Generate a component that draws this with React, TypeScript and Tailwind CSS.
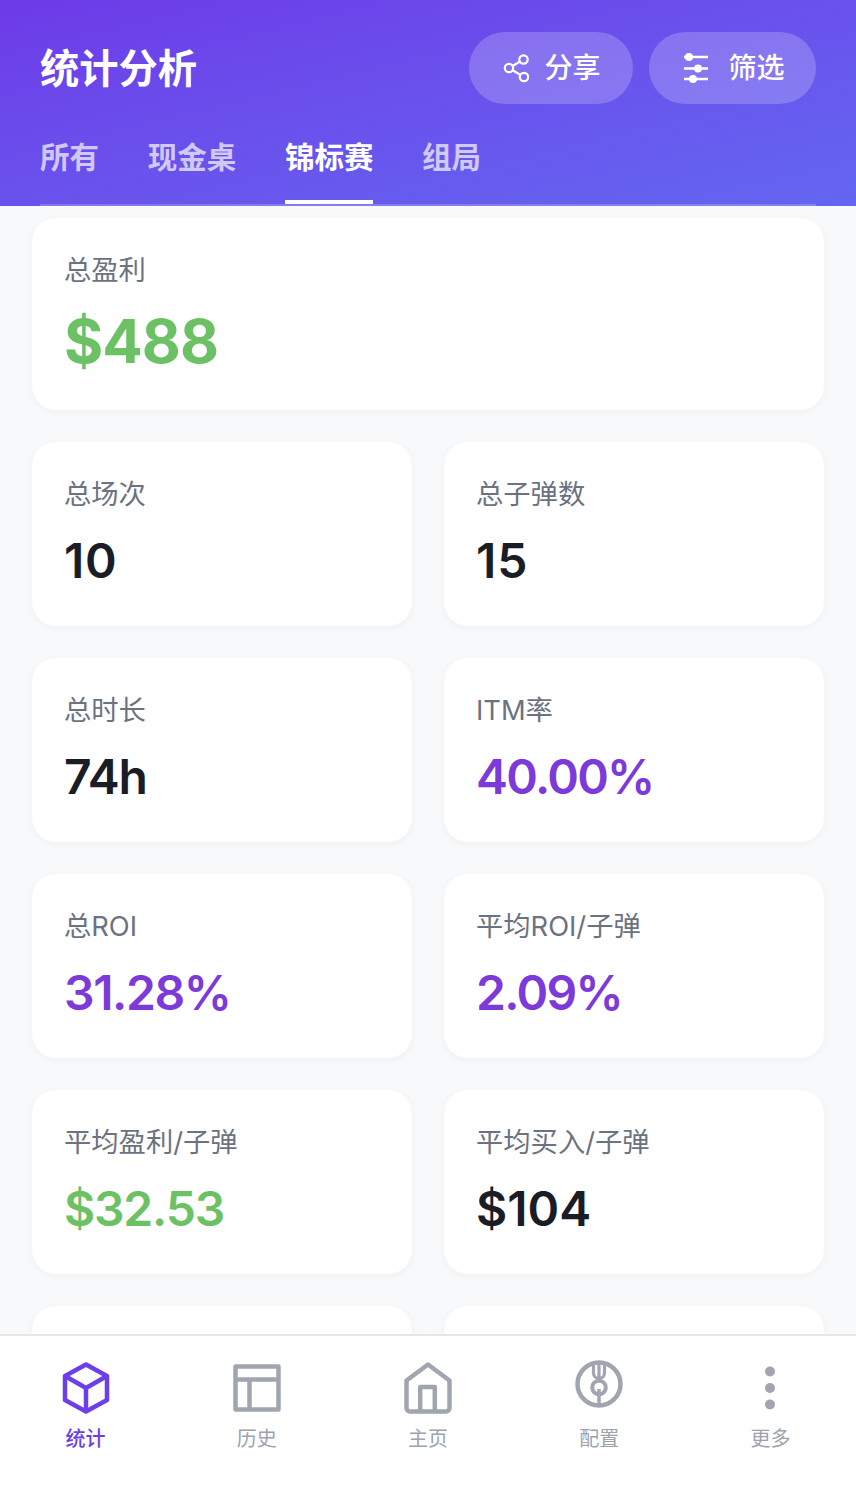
import type { ReactNode } from "react";

const font = "font-['Inter','Noto_Sans_CJK_SC',sans-serif]";

type Stat = {
  label: string;
  value: string;
  color: string;
  tracking?: string;
};

const stats: Stat[] = [
  { label: "总场次", value: "10", color: "text-[#1a1d26]", tracking: "tracking-[0.8px]" },
  { label: "总子弹数", value: "15", color: "text-[#1a1d26]", tracking: "tracking-[1px]" },
  { label: "总时长", value: "74h", color: "text-[#1a1d26]", tracking: "tracking-[-1.2px]" },
  { label: "ITM率", value: "40.00%", color: "text-[#7c3adb]", tracking: "tracking-[-1.7px]" },
  { label: "总ROI", value: "31.28%", color: "text-[#7c3adb]", tracking: "tracking-[-1.4px]" },
  { label: "平均ROI/子弹", value: "2.09%", color: "text-[#7c3adb]", tracking: "tracking-[-1.7px]" },
  { label: "平均盈利/子弹", value: "$32.53", color: "text-[#6cc164]", tracking: "tracking-[-1.2px]" },
  { label: "平均买入/子弹", value: "$104", color: "text-[#1a1d26]" },
];

const tabs = ["所有", "现金桌", "锦标赛", "组局"];

function ShareIcon() {
  return (
    <svg width="28" height="30" viewBox="-2 0 28 30" fill="none" stroke="white" strokeWidth="2.2">
      <circle cx="20.500" cy="6.500" r="4.200" />
      <circle cx="6" cy="15" r="4.200" />
      <circle cx="21" cy="24" r="4.200" />
      <path d="M9.700 13 17 8.500M9.700 17.200 17.500 22" />
    </svg>
  );
}

function FilterIcon() {
  return (
    <svg width="24" height="30" viewBox="0 0 24 30" fill="white" stroke="white" strokeWidth="2.600">
      <path d="M0 4h24M0 15.500h24M0 26h24" />
      <circle cx="5" cy="4" r="4" stroke="none" />
      <circle cx="14" cy="15.500" r="4" stroke="none" />
      <circle cx="9" cy="26" r="4" stroke="none" />
    </svg>
  );
}

function CubeIcon() {
  return (
    <svg width="48" height="52" viewBox="0 0 48 52" fill="none" stroke="#6d3fe8" strokeWidth="4.500" strokeLinejoin="round">
      <path d="M24 2.500 45 14v24L24 49.500 3 38V14Z" />
      <path d="M3 14 24 26l21-12M24 26v23.500" />
    </svg>
  );
}

function HistoryIcon() {
  return (
    <svg width="48" height="48" viewBox="0 0 48 48" fill="none" stroke="#a1a5af" strokeWidth="4.500" strokeLinejoin="round">
      <path d="M2.500 2.500h43v43h-43ZM2.500 15.500h43M16.500 15.500v30" />
    </svg>
  );
}

function HomeIcon() {
  return (
    <svg width="48" height="52" viewBox="0 0 48 52" fill="none" stroke="#a1a5af" strokeWidth="4.500" strokeLinejoin="round">
      <path d="M2.500 18.500 24 2.500l21.500 16V46a3.500 3.500 0 0 1-3.500 3.500H6A3.500 3.500 0 0 1 2.500 46Z" />
      <path d="M16.200 49V25h14.600v24" />
    </svg>
  );
}

function ConfigIcon() {
  return (
    <svg width="48" height="48" viewBox="0 0 48 48" fill="none" stroke="#a1a5af">
      <circle cx="24" cy="24" r="21.500" strokeWidth="4.500" />
      <path d="M18.500 5v8a5.500 5.500 0 0 0 11 0V5M24 3v14" strokeWidth="3.200" />
      <circle cx="24" cy="27.500" r="6.800" strokeWidth="4" />
      <path d="M24 29v17" strokeWidth="3.500" />
    </svg>
  );
}

function MoreIcon() {
  return (
    <svg width="12" height="44" viewBox="0 0 12 44" fill="#a1a5af">
      <circle cx="6" cy="5.500" r="5" />
      <circle cx="6" cy="22" r="5" />
      <circle cx="6" cy="38.500" r="5" />
    </svg>
  );
}

const navItems: { label: string; icon: ReactNode; lift?: string; active?: boolean }[] = [
  { label: "统计", icon: <CubeIcon />, active: true },
  { label: "历史", icon: <HistoryIcon /> },
  { label: "主页", icon: <HomeIcon /> },
  { label: "配置", icon: <ConfigIcon />, lift: "-translate-y-1" },
  { label: "更多", icon: <MoreIcon /> },
];

const cardClass = "h-[184px] rounded-[24px] bg-white px-8 pt-[33px] shadow-[0_2px_8px_rgba(0,0,0,0.04)]";

function StatCard({ label, value, color, tracking }: Stat) {
  return (
    <div className={cardClass}>
      <p className="text-[27.300px] leading-[40px] text-[#6b7280]">{label}</p>
      <p className={`mt-[16px] text-[48px] leading-[60px] font-semibold ${color} ${tracking ?? ""}`}>{value}</p>
    </div>
  );
}

export default function App() {
  return (
    <div className={`${font} flex h-[1502px] w-[856px] flex-col overflow-hidden bg-[#f8f9fb]`}>
      <header className="h-[206px] shrink-0 bg-gradient-to-br from-[#6d3ae8] to-[#6366f1] px-10 pt-8">
        <div className="flex h-[72px] items-center justify-between">
          <h1 className="pt-[2px] text-[39.250px] font-bold text-white">统计分析</h1>
          <div className="flex gap-4">
            <button className="flex h-[72px] w-[164px] items-center justify-center gap-[15px] rounded-full bg-white/20 text-[28px] font-medium text-white">
              <ShareIcon />
              分享
            </button>
            <button className="flex h-[72px] w-[167px] items-center justify-center gap-[20px] rounded-full bg-white/20 pl-1 text-[28px] font-medium text-white">
              <FilterIcon />
              筛选
            </button>
          </div>
        </div>
        <nav className="mt-4 flex h-[86px] gap-[48.700px] border-b-2 border-white/20">
          {tabs.map((tab) => (
            <span
              key={tab}
              className={
                tab === "锦标赛"
                  ? "h-[84px] border-b-4 border-white pt-[15px] text-[29.500px] leading-[44px] font-bold text-white"
                  : "pt-[15px] text-[29.500px] leading-[44px] font-bold text-white/70"
              }
            >
              {tab}
            </span>
          ))}
        </nav>
      </header>

      <main className="min-h-0 flex-1 overflow-hidden px-8 pt-3">
        <div className="h-[192px] rounded-[24px] bg-white px-8 pt-[33px] shadow-[0_2px_8px_rgba(0,0,0,0.04)]">
          <p className="text-[27.300px] leading-[40px] text-[#6b7280]">总盈利</p>
          <p className="mt-[14px] text-[60px] leading-[72px] font-bold tracking-[-1px] text-[#6cc164]">$488</p>
        </div>
        <div className="mt-8 grid grid-cols-2 gap-8">
          {stats.map((stat) => (
            <StatCard key={stat.label} {...stat} />
          ))}
          <div className={cardClass} />
          <div className={cardClass} />
        </div>
      </main>

      <footer className="z-10 grid h-[168px] shrink-0 grid-cols-5 border-t-2 border-[#e5e7eb] bg-white">
        {navItems.map((item) => (
          <div key={item.label} className="flex flex-col items-center pt-6">
            <div className={`flex h-[56px] items-center justify-center ${item.lift ?? ""}`}>{item.icon}</div>
            <span
              className={`mt-[8px] text-[20px] leading-[30px] ${
                item.active ? "font-medium text-[#6d3fe8]" : "text-[#9ca3af]"
              }`}
            >
              {item.label}
            </span>
          </div>
        ))}
      </footer>
    </div>
  );
}
